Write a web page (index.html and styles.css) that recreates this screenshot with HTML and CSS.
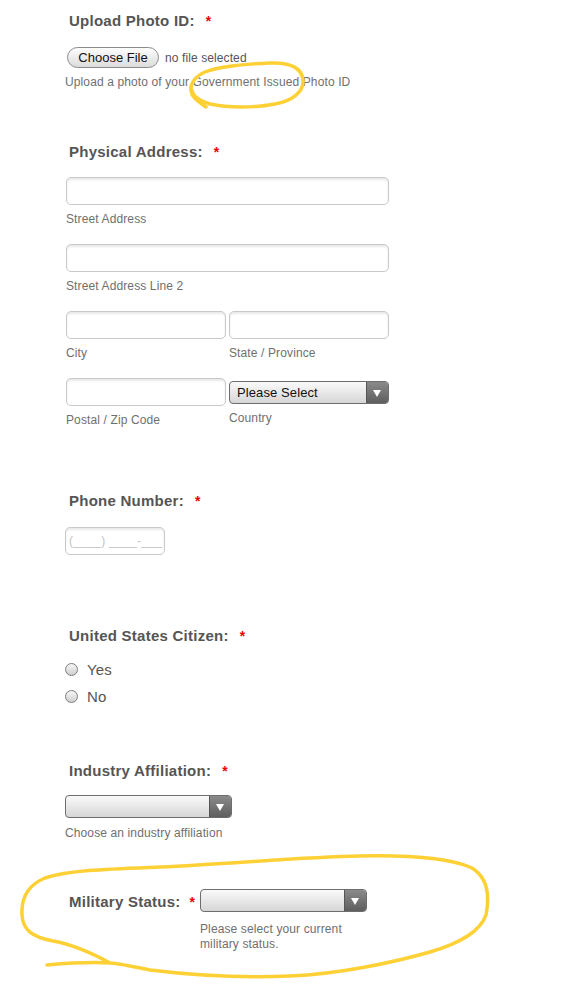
FILE: index.html
```html
<!DOCTYPE html>
<html>
<head>
<meta charset="utf-8">
<link rel="stylesheet" href="styles.css">
</head>
<body>
<div class="page">
  <div class="form">
    <section class="line s-upload">
      <h3 class="label">Upload Photo ID:<span class="req">*</span></h3>
      <div class="file-row">
        <span class="file-btn">Choose File</span>
        <span class="file-name">no file selected</span>
      </div>
      <div class="hint hint-upload">Upload a photo of your Government Issued Photo ID</div>
    </section>

    <section class="line s-address">
      <h3 class="label">Physical Address:<span class="req">*</span></h3>
      <div class="addr">
        <div class="full">
          <span class="input wide"></span>
          <div class="sub">Street Address</div>
        </div>
        <div class="full gap">
          <span class="input wide"></span>
          <div class="sub">Street Address Line 2</div>
        </div>
        <div class="pair gap">
          <div>
            <span class="input half"></span>
            <div class="sub">City</div>
          </div>
          <div>
            <span class="input half"></span>
            <div class="sub">State / Province</div>
          </div>
        </div>
        <div class="pair gap">
          <div>
            <span class="input half"></span>
            <div class="sub">Postal / Zip Code</div>
          </div>
          <div>
            <span class="select country"><span class="sel-text">Please Select</span><span class="sel-arrow"></span></span>
            <div class="sub sub-country">Country</div>
          </div>
        </div>
      </div>
    </section>

    <section class="line s-phone">
      <h3 class="label">Phone Number:<span class="req">*</span></h3>
      <span class="input phone">(____) ____-___</span>
    </section>

    <section class="line s-citizen">
      <h3 class="label">United States Citizen:<span class="req">*</span></h3>
      <div class="radios">
        <div class="radio-row"><span class="radio"></span><span class="radio-text">Yes</span></div>
        <div class="radio-row"><span class="radio"></span><span class="radio-text">No</span></div>
      </div>
    </section>

    <section class="line s-industry">
      <h3 class="label">Industry Affiliation:<span class="req">*</span></h3>
      <span class="select industry"><span class="sel-text"></span><span class="sel-arrow"></span></span>
      <div class="hint hint-industry">Choose an industry affiliation</div>
    </section>

    <section class="line s-military">
      <h3 class="label inline">Military Status:<span class="req">*</span></h3>
      <div class="mil-field">
        <span class="select industry"><span class="sel-text"></span><span class="sel-arrow"></span></span>
        <div class="hint hint-mil">Please select your current military status.</div>
      </div>
    </section>
  </div>

  <svg class="marks" width="563" height="1002" viewBox="0 0 563 1002" aria-hidden="true">
    <path d="M206 107 C199 102 192 98 191 91 C190 83 196 76 205 72 C220 66 245 64 270 63 C290 62 302 68 303 80 C304 92 292 101 275 104 C255 108 228 108 210 104 C200 101 193 97 192 90" />
    <path d="M47 965 C70 963 92 962 110 963 C90 952 70 944 53 941 C32 937 23 930 22 915 C21 898 28 885 45 878 C70 870 110 869 160 867 C230 864 300 857 360 856 C410 855 450 858 472 868 C488 878 490 895 486 915 C480 932 460 943 430 952 C395 962 340 974 290 976 C240 978 190 975 150 970 C130 966 117 963 110 963" />
  </svg>
</div>
</body>
</html>
```

FILE: styles.css
```css
* { box-sizing: border-box; }

html, body {
  margin: 0;
  padding: 0;
  background: #fff;
}

.page {
  position: relative;
  width: 563px;
  height: 1002px;
  overflow: hidden;
  font-family: "Liberation Sans", Arial, Helvetica, sans-serif;
  color: #555;
}

.form {
  padding: 12px 0 0 65px;
  display: flex;
  flex-direction: column;
}

.label {
  margin: 0;
  padding-left: 4px;
  font-size: 15px;
  line-height: 18px;
  font-weight: bold;
  color: #555;
  letter-spacing: 0.25px;
}

.req {
  color: #e00;
  margin-left: 11px;
  font-size: 14px;
}

/* upload */
.file-row {
  margin-top: 17px;
  display: flex;
  align-items: center;
  gap: 6px;
  padding-left: 2px;
}

.file-btn {
  display: inline-flex;
  align-items: center;
  justify-content: center;
  width: 92px;
  height: 21px;
  border: 1px solid #8a8a8a;
  border-radius: 11px;
  background: linear-gradient(#fdfdfd, #dcdcdc);
  font-size: 13px;
  color: #111;
}

.file-name {
  font-size: 12px;
  color: #555;
  letter-spacing: 0.1px;
}

.hint {
  font-size: 12px;
  line-height: 15px;
  color: #6f6f6f;
  letter-spacing: 0.12px;
}

.hint-upload { margin-top: 7px; }

/* address */
.s-address { margin-top: 53px; }

.addr {
  margin-top: 16px;
  padding-left: 1px;
}

.gap { margin-top: 18px; }

.input {
  display: block;
  height: 28px;
  border: 1px solid #c9c9c9;
  border-radius: 5px;
  background: #fff;
  box-shadow: inset 0 2px 2px rgba(0, 0, 0, 0.09);
}

.input.wide { width: 323px; }
.input.half { width: 160px; }

.sub {
  margin-top: 7px;
  font-size: 12px;
  line-height: 14px;
  color: #6f6f6f;
  letter-spacing: 0.12px;
}

.pair {
  display: grid;
  grid-template-columns: 160px 160px;
  column-gap: 3px;
}

.select {
  display: flex;
  height: 23px;
  border: 1px solid #6d6d6d;
  border-radius: 4px;
  overflow: hidden;
  background: linear-gradient(#fafafa, #d6d6d6);
}

.select.country {
  margin-top: 3px;
  width: 160px;
}

.sel-text {
  flex: 1;
  font-size: 13px;
  line-height: 21px;
  color: #111;
  padding-left: 7px;
  letter-spacing: 0.1px;
}

.sel-arrow {
  position: relative;
  width: 22px;
  background: linear-gradient(#8a8a8a, #5e5e5e);
  border-left: 1px solid #555;
}

.sel-arrow::after {
  content: "";
  position: absolute;
  left: 6px;
  top: 8px;
  border-left: 4px solid transparent;
  border-right: 4px solid transparent;
  border-top: 7px solid #fff;
}

.sub-country { margin-top: 7px; }

/* phone */
.s-phone { margin-top: 65px; }

.input.phone {
  margin-top: 17px;
  width: 100px;
  height: 28px;
  font-size: 12px;
  line-height: 26px;
  color: #c4c4c4;
  padding-left: 3px;
  letter-spacing: 0.3px;
  white-space: nowrap;
  overflow: hidden;
}

/* citizen */
.s-citizen { margin-top: 72px; }

.radios {
  margin-top: 15px;
  display: flex;
  flex-direction: column;
  gap: 9px;
}

.radio-row {
  display: flex;
  align-items: center;
  height: 18px;
}

.radio {
  width: 13px;
  height: 13px;
  border: 1px solid #7d7d7d;
  border-radius: 50%;
  background: linear-gradient(#f6f6f6, #cfcfcf);
}

.radio-text {
  margin-left: 9px;
  font-size: 15px;
  color: #555;
  letter-spacing: 0.2px;
}

/* industry */
.s-industry { margin-top: 57px; }

.select.industry {
  width: 167px;
}

.s-industry .select { margin-top: 15px; }

.hint-industry { margin-top: 8px; }

/* military */
.s-military {
  margin-top: 48px;
  display: flex;
  align-items: flex-start;
}

.label.inline {
  margin-top: 4px;
  width: 135px;
}

.label.inline .req { margin-left: 9px; }

.mil-field {
  display: flex;
  flex-direction: column;
}

.hint-mil {
  margin-top: 10px;
  width: 150px;
}

/* annotation marker strokes */
.marks {
  position: absolute;
  left: 0;
  top: 0;
  pointer-events: none;
}

.marks path {
  fill: none;
  stroke: #fdd136;
  stroke-width: 3.5;
  stroke-linecap: round;
  stroke-linejoin: round;
}
```
